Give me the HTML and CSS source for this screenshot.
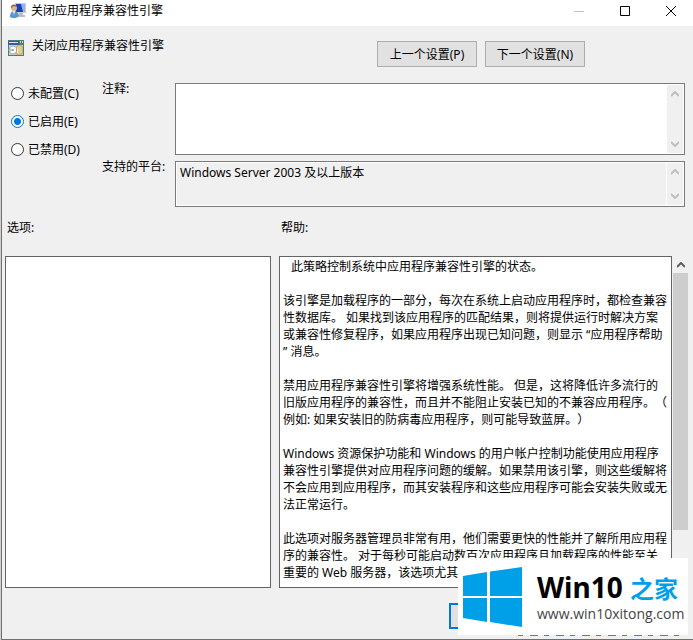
FILE: index.html
```html
<!DOCTYPE html>
<html lang="zh-CN">
  <head>
    <meta charset="UTF-8" />
    <meta name="viewport" content="width=device-width, initial-scale=1.0" />
    <title>关闭应用程序兼容性引擎</title>
    <link rel="stylesheet" href="styles.css">
  </head>
  <body>
    <div class="window">
      <div class="titlebar">
        <svg class="icon" viewBox="0 0 16 16">
          <rect x="5" y="0" width="11" height="10" fill="#c9cdd2" />
          <rect x="6" y="1" width="9" height="8" fill="#1c3fb4" />
          <path d="M11 1h4v8h-2z" fill="#8fb4f0" />
          <path d="M9 10h4v2h2v2H8v-2h1z" fill="#b9bcc0" />
          <circle cx="4" cy="5" r="3" fill="#d9b48c" />
          <path d="M1 5a3 3 0 0 1 6-1L4 3z" fill="#8a6a4c" />
          <path d="M0 14c0-4 2-6 4-6s5 2 5 5l-3 2H2z" fill="#5b96cc" />
          <path d="M3 8h2l-1 4z" fill="#ffffff" />
        </svg>
        <span class="caption">关闭应用程序兼容性引擎</span>
        <button type="button" class="control" aria-label="最小化" disabled>
          <svg viewBox="0 0 10 10"><path d="M0 5.500h10" stroke="#c4c4c4" /></svg>
        </button>
        <button type="button" class="control" aria-label="最大化">
          <svg viewBox="0 0 10 10"><path d="M.5.5h9v9h-9z" fill="none" stroke="#000" /></svg>
        </button>
        <button type="button" class="control" aria-label="关闭">
          <svg viewBox="0 0 10 10"><path d="M0 0l10 10M10 0L0 10" stroke="#000" /></svg>
        </button>
      </div>

      <form class="policy">
        <div class="header">
          <svg class="icon" viewBox="0 0 16 16">
            <rect width="16" height="16" fill="#4d7d78" />
            <rect y="1" width="11" height="4" fill="#3a5c9c" />
            <path d="M1 2h9v1H1z" fill="#dbe4ee" />
            <path d="M12 1h1v2h-1zM14 1h1v2h-1z" fill="#f2d36a" />
            <rect x="1" y="5" width="14" height="10" fill="#c9d2d0" />
            <circle cx="5" cy="10" r="4" fill="#ffffff" stroke="#a8b0b0" />
            <path d="M5 10l-3-2v4z" fill="#a9cf98" />
            <circle cx="5" cy="10" r="1" fill="#8a9494" />
            <path d="M9 6h5v8H8z" fill="#fff6cf" stroke="#b89a52" />
            <path d="M10 8h3M10 10h3M10 12h3" stroke="#c4a860" />
          </svg>
          <span class="name">关闭应用程序兼容性引擎</span>
          <button type="button" class="btn">上一个设置(P)</button>
          <button type="button" class="btn">下一个设置(N)</button>
        </div>

        <div class="settings">
          <div class="states">
            <label><input type="radio" name="state" />未配置(C)</label>
            <label><input type="radio" name="state" checked />已启用(E)</label>
            <label><input type="radio" name="state" />已禁用(D)</label>
          </div>
          <div class="fields">
            <label for="comment">注释:</label>
            <div class="field comment">
              <textarea id="comment"></textarea>
              <div class="scroll">
                <svg viewBox="0 0 8 6"><path d="M0 5l4-4 4 4" /></svg>
                <svg viewBox="0 0 8 6"><path d="M0 1l4 4 4-4" /></svg>
              </div>
            </div>
            <label for="platform">支持的平台:</label>
            <div class="field platform">
              <textarea id="platform" readonly>Windows Server 2003 及以上版本</textarea>
              <div class="scroll">
                <svg viewBox="0 0 8 6"><path d="M0 5l4-4 4 4" /></svg>
                <svg viewBox="0 0 8 6"><path d="M0 1l4 4 4-4" /></svg>
              </div>
            </div>
          </div>
        </div>

        <div class="panels">
          <div class="panel options">
            <div class="heading">选项:</div>
            <div class="box"></div>
          </div>
          <div class="panel help">
            <div class="heading">帮助:</div>
            <div class="box">
              <p class="first">此策略控制系统中应用程序兼容性引擎的状态。</p>
              <p>该引擎是加载程序的一部分，每次在系统上启动应用程序时，都检查兼容<br>性数据库。 如果找到该应用程序的匹配结果，则将提供运行时解决方案<br>或兼容性修复程序，如果应用程序出现已知问题，则显示 “应用程序帮助<br>” 消息。</p>
              <p>禁用应用程序兼容性引擎将增强系统性能。 但是，这将降低许多流行的<br>旧版应用程序的兼容性，而且并不能阻止安装已知的不兼容应用程序。（<br>例如: 如果安装旧的防病毒应用程序，则可能导致蓝屏。）</p>
              <p>Windows 资源保护功能和 Windows 的用户帐户控制功能使用应用程序<br>兼容性引擎提供对应用程序问题的缓解。如果禁用该引擎，则这些缓解将<br>不会应用到应用程序，而其安装程序和这些应用程序可能会安装失败或无<br>法正常运行。</p>
              <p>此选项对服务器管理员非常有用，他们需要更快的性能并了解所用应用程<br>序的兼容性。 对于每秒可能启动数百次应用程序且加载程序的性能至关<br>重要的 Web 服务器，该选项尤其</p>
            </div>
          </div>
          <div class="helpbar">
            <svg viewBox="0 0 8 6"><path d="M0 5l4-4 4 4" /></svg>
            <div class="thumb"></div>
          </div>
        </div>

        <div class="footer">
          <button type="submit" class="btn ok" aria-label="确定"></button>
        </div>
      </form>
    </div>

    <div class="watermark">
      <svg class="logo" viewBox="0 0 60 60">
        <path d="M0 9l24-4v24H0zM27 4.500l32-4.500v29H27zM0 31h24v24L0 51zM27 31h32v29l-32-5z" fill="#00a0e9" />
      </svg>
      <div>
        <div class="brand">Win10 <span>之家</span></div>
        <div class="site">www.win10xitong.com</div>
      </div>
    </div>
  </body>
</html>
```
FILE: styles.css
```css
* {
  box-sizing: border-box;
}
body {
  margin: 0;
  background-color: #d0d0d0;
  font-family: "Noto Sans", "Noto Sans CJK SC", sans-serif;
  font-size: 12px;
  line-height: 17px;
  color: #000000;
  text-spacing-trim: space-all;
}
button,
textarea {
  font: inherit;
  color: inherit;
}
.window {
  display: flex;
  flex-direction: column;
  min-height: 100vh;
  margin-left: 1px;
  border-left: 1px solid #707070;
  border-bottom: 1px solid #707070;
  background-color: #f0f0f0;
}
.icon {
  width: 16px;
  height: 16px;
}

/* title bar */
.titlebar {
  display: flex;
  align-items: center;
  height: 26px;
  padding: 0 0 5px 8px;
  background-color: #ffffff;
}
.caption {
  flex: 1;
  margin-left: 5px;
}
.control {
  width: 46px;
  height: 20px;
  padding: 0 0 0 19px;
  border: none;
  background: none;
}
.control svg {
  display: block;
  width: 10px;
  height: 10px;
}

.policy {
  display: flex;
  flex: 1;
  flex-direction: column;
}
.header {
  display: flex;
  gap: 8px;
  padding: 15px 108px 0 6px;
}
.header .icon {
  margin-top: -1px;
}
.name {
  flex: 1;
  margin-top: -4px;
}
.btn {
  width: 100px;
  height: 26px;
  padding: 0;
  border: 1px solid #adadad;
  background-color: #e1e1e1;
}

/* state and text fields */
.settings {
  display: flex;
  padding: 16px 8px 0 8px;
}
.states {
  display: flex;
  flex-direction: column;
  gap: 11px;
  width: 92px;
  padding-top: 2px;
}
.states label {
  display: flex;
  align-items: center;
}
.states input {
  appearance: none;
  width: 13px;
  height: 13px;
  margin: 0 4px 0 1px;
  border: 1px solid #333333;
  border-radius: 50%;
  background-color: #ffffff;
}
.states input:checked {
  border-color: #0078d7;
  background: radial-gradient(#0078d7 0 3px, #ffffff 4px);
}
.fields {
  display: grid;
  flex: 1;
  grid-template-columns: 73px 1fr;
  row-gap: 6px;
}
.fields label {
  line-height: 12px;
}
.field {
  display: flex;
  padding: 1px;
  border: 1px solid #7a7a7a;
  background-color: #ffffff;
}
.comment {
  height: 72px;
}
.platform {
  height: 46px;
}
textarea {
  flex: 1;
  padding: 1px 3px;
  border: none;
  outline: none;
  resize: none;
  overflow: hidden;
  background-color: #ffffff;
}
.platform textarea {
  margin-right: 1px;
  background-color: #f0f0f0;
}
.scroll {
  display: flex;
  flex-direction: column;
  justify-content: space-between;
  align-items: center;
  width: 16px;
  padding: 6px 0;
  background-color: #f0f0f0;
}
.scroll svg,
.helpbar svg {
  width: 8px;
  height: 6px;
  fill: none;
  stroke: #bfbfbf;
  stroke-width: 2;
}

/* options and help */
.panels {
  display: flex;
  flex: 1;
  padding: 12px 5px 0 3px;
}
.panel {
  display: flex;
  flex-direction: column;
}
.options {
  flex: 266;
}
.help {
  flex: 393;
  margin-left: 8px;
}
.heading {
  height: 37px;
  padding-left: 2px;
}
.box {
  flex: 1;
  padding: 1px 0 6px 3px;
  border: 1px solid #646464;
  background-color: #ffffff;
  white-space: nowrap;
}
.box p {
  margin: 0 0 17px;
}
.box p:last-child {
  margin: 0;
}
.box .first {
  padding-left: 8px;
}
.helpbar {
  display: flex;
  flex-direction: column;
  align-items: center;
  width: 16px;
  padding: 43px 0 0 1px;
}
.helpbar svg {
  flex: none;
  stroke: #606060;
}
.thumb {
  width: 15px;
  height: 257px;
  margin-top: 5px;
  background-color: #cdcdcd;
}
.footer {
  display: flex;
  justify-content: flex-end;
  padding: 15px 144px 10px 0;
}
.ok {
  border: 2px solid #0078d7;
}

/* site badge over the window corner */
.watermark {
  position: absolute;
  right: 5px;
  bottom: 5px;
  display: flex;
  align-items: center;
  width: 230px;
  height: 77px;
  padding-left: 5px;
  background-color: #ffffff;
}
.watermark::after {
  content: "";
  position: absolute;
  right: 2px;
  bottom: -1px;
  left: 60px;
  height: 1px;
  background: repeating-linear-gradient(90deg, #3a86bd 0 5px, #f0f0f0 5px 12px, #3a86bd 12px 20px, #f0f0f0 20px 26px);
}
.logo {
  width: 60px;
  height: 60px;
  margin-right: 14px;
}
.brand {
  font-size: 28px;
  font-weight: bold;
  line-height: 32px;
  white-space: nowrap;
}
.brand span {
  font-size: 24px;
  color: #00a0e9;
}
.site {
  font-family: "Open Sans", sans-serif;
  font-size: 14px;
  line-height: 18px;
  color: #444444;
}
```
